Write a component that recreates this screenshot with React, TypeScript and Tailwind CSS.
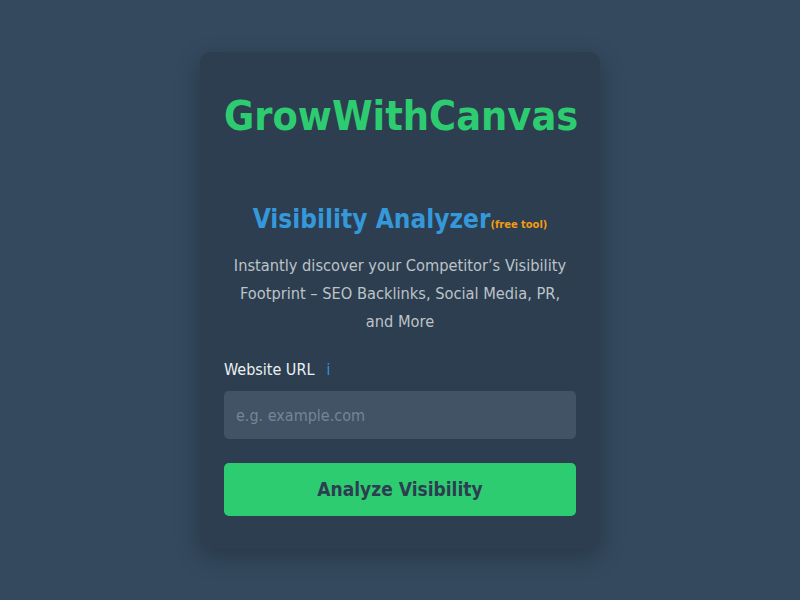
import React from "react";

export default function App() {
  return (
    <div className="min-h-screen w-full bg-[#34495e] flex items-center justify-center" style={{ fontFamily: '"DejaVu Sans Condensed", "DejaVu Sans", sans-serif' }}>
      <div className="w-[400px] h-[496px] bg-[#2c3e50] rounded-[10px] shadow-[0_8px_24px_rgba(0,0,0,0.25)] px-6 pt-[38px] flex flex-col">
        <h1 className="text-center text-[#2ecc71] font-bold text-[41px] leading-[52px]">GrowWithCanvas</h1>
        <h2 className="mt-[59px] text-center text-[#3498db] font-bold text-[26px] leading-[36px]">
          Visibility Analyzer<span className="text-[#f39c12] text-[11px]">(free tool)</span>
        </h2>
        <p className="mt-[9px] text-center text-[#bdc3c7] text-[16.25px] leading-[28px]">
          Instantly discover your Competitor’s Visibility Footprint – SEO Backlinks, Social Media, PR, and More
        </p>
        <div className="mt-[22px] flex items-center text-[16px] leading-[24px] text-[#ecf0f1]">
          <span>Website URL</span>
          <span className="ml-[12px] text-[#3498db] text-[15px]">i</span>
        </div>
        <input
          className="mt-[9px] h-[48px] w-full rounded-[5px] bg-[#425366] px-3 text-[16px] text-[#ecf0f1] placeholder:text-[#758596] outline-none"
          placeholder="e.g. example.com"
        />
        <button className="mt-[24px] h-[53px] w-full rounded-[5px] bg-[#2ecc71] text-[#2c3e50] font-bold text-[19px]">
          Analyze Visibility
        </button>
      </div>
    </div>
  );
}
